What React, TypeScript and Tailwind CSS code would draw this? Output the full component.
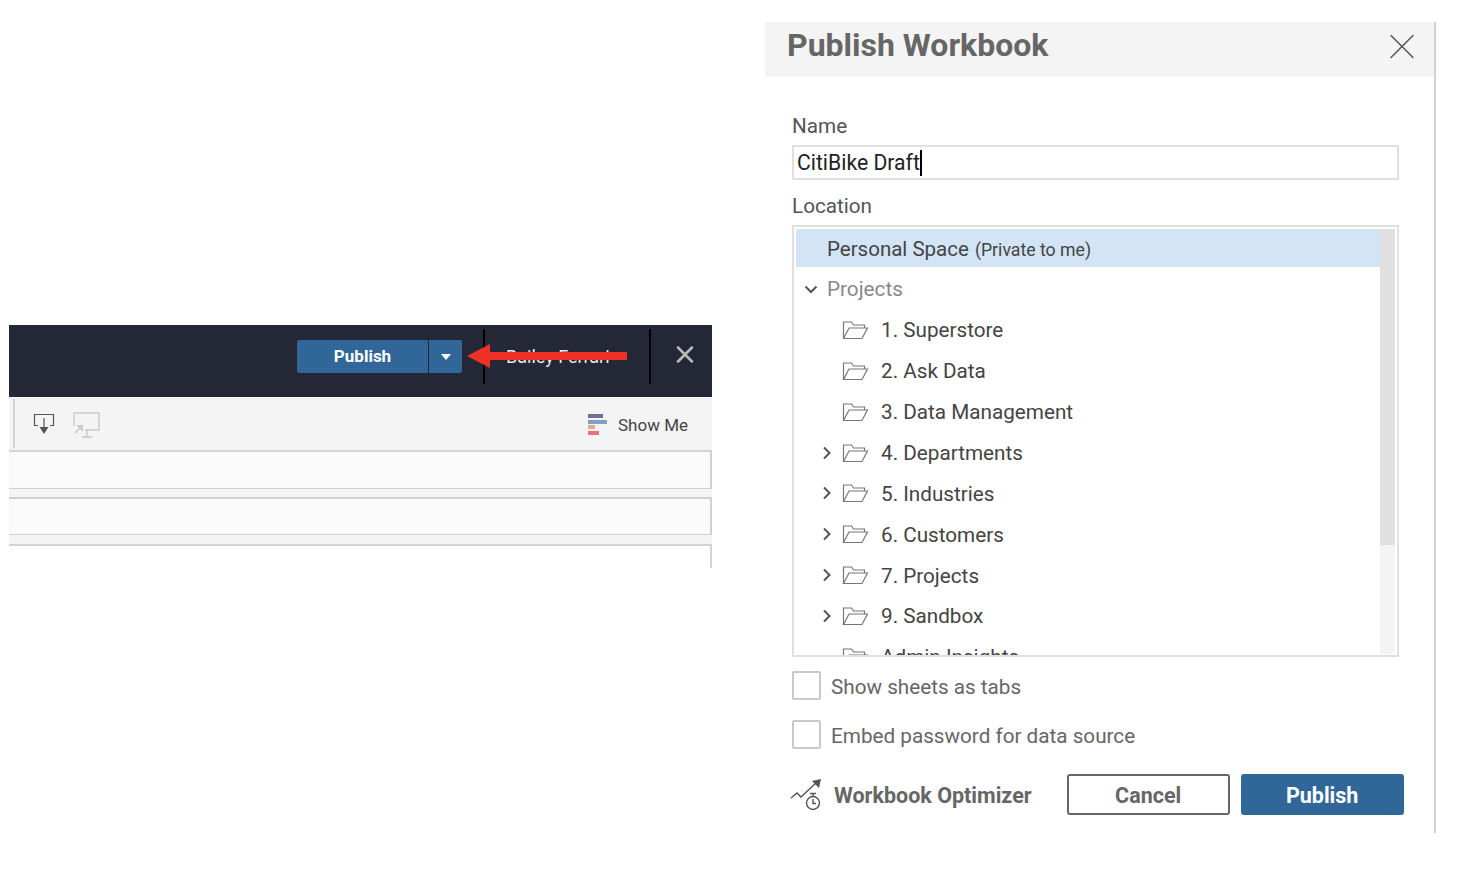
import { X } from 'lucide-react';

const projects = [
  { label: '1. Superstore', expandable: false },
  { label: '2. Ask Data', expandable: false },
  { label: '3. Data Management', expandable: false },
  { label: '4. Departments', expandable: true },
  { label: '5. Industries', expandable: true },
  { label: '6. Customers', expandable: true },
  { label: '7. Projects', expandable: true },
  { label: '9. Sandbox', expandable: true },
  { label: 'Admin Insights', expandable: false },
];

function FolderIcon() {
  return (
    <svg width="27" height="20" viewBox="0 0 27 20" fill="none" stroke="#777" strokeWidth="1.2" className="shrink-0">
      <path d="M1.5 18.5V2h8l2 3h11v3" />
      <path d="M1.5 18.5h18.5l5.5-10.5H7z" />
    </svg>
  );
}

function Chevron() {
  return (
    <svg width="10" height="14" viewBox="0 0 10 14" fill="none" stroke="#555" strokeWidth="2" className="shrink-0">
      <path d="M2 1.5 7.5 7 2 12.5" />
    </svg>
  );
}

function ExportIcon() {
  return (
    <svg width="22" height="22" viewBox="0 0 22 22" fill="none" stroke="#555" strokeWidth="1.2">
      <path d="M5 12.5H1.5V1.5h19v11H17" />
      <path d="M11 5v10" />
      <path d="M6.5 14h9L11 21z" fill="#555" stroke="none" />
    </svg>
  );
}

function PresentIcon() {
  return (
    <svg width="27" height="26" viewBox="0 0 27 26" fill="none" stroke="#c9c9c9" strokeWidth="1.3" className="translate-y-[1px]">
      <path d="M1 14V1h25v17H12" />
      <path d="M14 18v7M9 25h10" />
      <path d="M2 21 8 15" strokeWidth="1.6" />
      <path d="M3 13h7v7z" fill="#c9c9c9" stroke="none" />
    </svg>
  );
}

function ShowMeIcon() {
  return (
    <div className="flex w-[20px] flex-col gap-[1.5px]">
      <div className="h-[4px] w-[15px] bg-[#7d6b8f]" />
      <div className="h-[4px] w-[19px] bg-[#7f9fc6]" />
      <div className="h-[4px] w-[7px] bg-[#e8a983]" />
      <div className="h-[4px] w-[11px] bg-[#e8737f]" />
    </div>
  );
}

function OptimizerIcon() {
  return (
    <svg width="32" height="32" viewBox="0 0 32 32" fill="none" stroke="#555" strokeWidth="1.4">
      <path d="M1 19l6-5 4 4L27 3" />
      <path d="M22 2l9-2-2 9z" fill="#555" stroke="none" />
      <circle cx="23" cy="24" r="6.5" />
      <path d="M23 20v4.5h3M20 14.5h6M23 14.5v3" />
    </svg>
  );
}

function Checkbox({ label }: { label: string }) {
  return (
    <div className="flex items-center gap-[10px]">
      <div className="h-[29px] w-[29px] rounded-[2px] border-2 border-[#c9c9c9] bg-white" />
      <span className="pt-[2px] text-[20.7px] leading-[26px] text-[#666]">{label}</span>
    </div>
  );
}

function WebAuthoringPanel() {
  return (
    <div className="relative mt-[325px] ml-[9px] h-[243px] w-[703px] shrink-0">
      <div className="flex h-[72px] items-center bg-[#242736] pb-[9px] pl-[288px]">
        <div className="flex h-[33px] w-[165px] overflow-hidden rounded-[2px] bg-[#306798] font-bold text-white">
          <div className="flex w-[131px] items-center justify-center text-[17px]">Publish</div>
          <div className="w-px bg-[#242736]" />
          <div className="flex flex-1 items-center justify-center">
            <div className="h-0 w-0 border-x-[5px] border-t-[6px] border-x-transparent border-t-white" />
          </div>
        </div>
        <div className="ml-[21px] h-[55px] w-[2px] bg-black" />
        <div className="w-[164px] pl-[21px] text-[18px] whitespace-nowrap text-[#e8e8e8]">Bailey Ferrari</div>
        <div className="h-[55px] w-[2px] bg-black" />
        <X size={28} strokeWidth={2.2} className="ml-[20px] -translate-y-[2.5px] text-[#b9b9b9]" />
      </div>
      <div className="flex h-[55px] items-center border-b-2 border-[#d4d4d4] bg-[#f4f4f4] pr-[24px]">
        <div className="ml-[4px] h-[49px] w-[2px] bg-[#d4d4d4]" />
        <div className="mr-[18px] ml-[18px]"><ExportIcon /></div>
        <PresentIcon />
        <div className="mt-[2px] ml-auto flex items-center gap-[10px]">
          <ShowMeIcon />
          <span className="mt-[2px] text-[17px] text-[#444]">Show Me</span>
        </div>
      </div>
      <div className="bg-[#f4f4f4]">
        <div className="h-[37px] border-r-2 border-b border-[#d0d0d0] bg-[#fafafa]" />
        <div className="h-[8px]" />
        <div className="h-[38px] border-t-2 border-r-2 border-b border-[#d0d0d0] bg-[#fafafa]" />
        <div className="h-[9px]" />
        <div className="h-[24px] border-t-2 border-r-2 border-[#d4d4d4] bg-white" />
      </div>
      {/* red annotation arrow drawn on top of the screenshot */}
      <svg width="162" height="24" viewBox="0 0 162 24" className="absolute top-[19px] left-[458px]">
        <path d="M0 12 23 0v8h137v8H23v8z" fill="#ee3124" />
      </svg>
    </div>
  );
}

function PublishDialog() {
  return (
    <div className="mt-[22px] ml-[53px] flex h-[811px] w-[671px] shrink-0 flex-col border-r-2 border-[#d2d2d2]">
      <div className="flex h-[55px] items-center justify-between bg-[#f4f4f4] pr-[10px] pl-[22px]">
        <h1 className="-translate-y-[5px] text-[32px] font-bold text-[#666]">Publish Workbook</h1>
        <X size={44} strokeWidth={0.8} className="-translate-y-[3.5px] text-[#555]" />
      </div>
      <div className="flex flex-1 flex-col pt-[36px] pl-[27px]">
        <div className="h-[32px] text-[20.7px] leading-[27px] text-[#555]">Name</div>
        <div className="flex h-[35px] w-[607px] items-center border-2 border-[#e0e0e0] pl-[3px] text-[21.2px] text-[#222]">
          <span className="pt-[1px]">CitiBike Draft</span>
          <span className="h-[26px] w-[2px] bg-black" />
        </div>
        <div className="mt-[13px] h-[32px] text-[20.7px] leading-[27px] text-[#555]">Location</div>
        <div className="flex h-[432px] w-[607px] border-2 border-[#e0e0e0] p-[2px] pb-0">
          <div className="h-full flex-1 overflow-hidden">
            <div className="flex h-[38px] items-center bg-[#d2e4f5] pl-[31px] text-[20.5px] text-[#444]">
              <span className="pt-[3px]">
                Personal Space
                <span className="ml-[6px] text-[17.7px]">(Private to me)</span>
              </span>
            </div>
            <div className="flex h-[41px] items-center pt-[3px] pl-[8px] text-[20.7px] text-[#888]">
              <svg width="14" height="9" viewBox="0 0 14 9" fill="none" stroke="#555" strokeWidth="2">
                <path d="M1.5 1.5 7 7l5.5-5.5" />
              </svg>
              <span className="ml-[9px] pt-[2px]">Projects</span>
            </div>
            {projects.map((item) => (
              <div key={item.label} className="flex h-[40.86px] items-center pt-[3px] text-[20.7px] text-[#444]">
                <div className="flex w-[46px] shrink-0 justify-end">
                  {item.expandable && <div className="mr-[10px]"><Chevron /></div>}
                </div>
                <FolderIcon />
                <span className="ml-[12px] pt-[2px] whitespace-nowrap">{item.label}</span>
              </div>
            ))}
          </div>
          <div className="h-[425px] w-[15px] bg-[#f4f4f4]">
            <div className="h-[316px] bg-[#e0e0e0]" />
          </div>
        </div>
        <div className="mt-[14px] flex flex-col gap-[20px]">
          <Checkbox label="Show sheets as tabs" />
          <Checkbox label="Embed password for data source" />
        </div>
        <div className="mt-[25px] flex items-center">
          <div className="-ml-[2px]"><OptimizerIcon /></div>
          <span className="ml-[12px] pt-[4px] text-[21.5px] font-bold text-[#666]">Workbook Optimizer</span>
          <button className="ml-[35px] h-[41px] w-[163px] rounded-[3px] border-2 border-[#666] bg-white pt-[3px] text-[21.5px] font-bold text-[#666]">
            Cancel
          </button>
          <button className="ml-[11px] h-[41px] w-[163px] rounded-[3px] bg-[#306798] pt-[3px] text-[21.5px] font-bold text-white">
            Publish
          </button>
        </div>
      </div>
    </div>
  );
}

export default function App() {
  return (
    <div className="flex h-[876px] w-[1464px] items-start overflow-hidden bg-white font-['Roboto',sans-serif]">
      <WebAuthoringPanel />
      <PublishDialog />
    </div>
  );
}
